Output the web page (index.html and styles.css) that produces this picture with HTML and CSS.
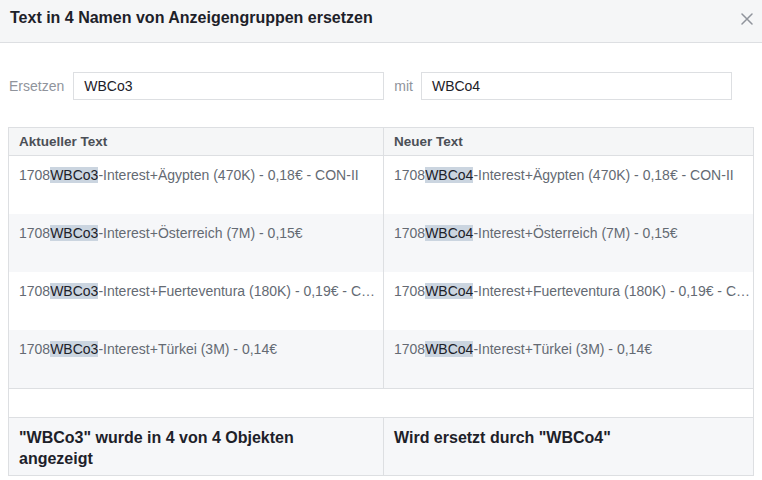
FILE: index.html
```html
<!DOCTYPE html>
<html lang="de">
<head>
<meta charset="utf-8">
<title>Text ersetzen</title>
<link rel="stylesheet" href="styles.css">
</head>
<body>
<div class="dialog">
  <div class="header">
    <h1 class="title">Text in 4 Namen von Anzeigengruppen ersetzen</h1>
    <button class="close" aria-label="Schließen">
      <svg width="12" height="12" viewBox="0 0 12 12"><path d="M1 1 L11 11 M11 1 L1 11" stroke="#90949c" stroke-width="1.5" fill="none" stroke-linecap="round"/></svg>
    </button>
  </div>
  <div class="form">
    <span class="label label-first">Ersetzen</span>
    <div class="input">WBCo3</div>
    <span class="label label-mit">mit</span>
    <div class="input">WBCo4</div>
  </div>
  <div class="grid">
    <div class="row head">
      <div class="cell">Aktueller Text</div>
      <div class="cell">Neuer Text</div>
    </div>
    <div class="row">
      <div class="cell">1708<span class="hl">WBCo3</span>-Interest+Ägypten (470K) - 0,18€ - CON-II</div>
      <div class="cell">1708<span class="hl">WBCo4</span>-Interest+Ägypten (470K) - 0,18€ - CON-II</div>
    </div>
    <div class="row alt">
      <div class="cell">1708<span class="hl">WBCo3</span>-Interest+Österreich (7M) - 0,15€</div>
      <div class="cell">1708<span class="hl">WBCo4</span>-Interest+Österreich (7M) - 0,15€</div>
    </div>
    <div class="row">
      <div class="cell">1708<span class="hl">WBCo3</span>-Interest+Fuerteventura (180K) - 0,19€ - C…</div>
      <div class="cell">1708<span class="hl">WBCo4</span>-Interest+Fuerteventura (180K) - 0,19€ - C…</div>
    </div>
    <div class="row alt last">
      <div class="cell">1708<span class="hl">WBCo3</span>-Interest+Türkei (3M) - 0,14€</div>
      <div class="cell">1708<span class="hl">WBCo4</span>-Interest+Türkei (3M) - 0,14€</div>
    </div>
    <div class="spacer"></div>
    <div class="row foot">
      <div class="cell">"WBCo3" wurde in 4 von 4 Objekten angezeigt</div>
      <div class="cell">Wird ersetzt durch "WBCo4"</div>
    </div>
  </div>
</div>
</body>
</html>
```
FILE: styles.css
```css
* { box-sizing: border-box; }
html, body { margin: 0; padding: 0; background: #ffffff; }
body {
  font-family: "Liberation Sans", Arial, Helvetica, sans-serif;
  color: #1d2129;
  width: 762px;
}
.dialog { width: 762px; }
.header {
  height: 43px;
  background: #f5f6f7;
  border-bottom: 1px solid #dddfe2;
  display: flex;
  justify-content: space-between;
  align-items: flex-start;
  padding: 8px 9px 0 10px;
}
.title {
  margin: 0;
  font-size: 16px;
  line-height: 20px;
  font-weight: bold;
  color: #1d2129;
}
.close {
  border: 0;
  background: transparent;
  padding: 0;
  margin-top: 5px;
  width: 12px;
  height: 12px;
  display: flex;
}
.form {
  display: flex;
  align-items: center;
  margin-top: 29px;
  padding-left: 9px;
  font-size: 14px;
}
.label { color: #90949c; line-height: 16px; }
.label-first { margin-right: 9px; }
.label-mit { margin-left: 10px; margin-right: 8px; }
.input {
  width: 311px;
  height: 28px;
  border: 1px solid #dddfe2;
  padding: 0 10px;
  line-height: 26px;
  color: #1d2129;
}
.grid {
  margin: 27px 0 0 8px;
  width: 746px;
  border: 1px solid #dddfe2;
}
.row {
  display: grid;
  grid-template-columns: 375px 1fr;
  height: 58px;
}
.cell {
  border-right: 1px solid #dddfe2;
  padding: 10px 10px 0 10px;
  font-size: 14px;
  line-height: 18px;
  color: #646a73;
  white-space: nowrap;
  overflow: hidden;
}
.cell:last-child { border-right: 0; }
.row.alt { background: #f6f7f9; }
.row.last { height: 59px; border-bottom: 1px solid #dddfe2; }
.row.head {
  height: 28px;
  background: #f5f6f7;
  border-bottom: 1px solid #dddfe2;
}
.row.head .cell {
  padding-top: 6px;
  font-size: 13.5px;
  line-height: 16px;
  font-weight: bold;
  color: #4b4f56;
}
.hl { background: #cbd5e0; color: #1d2129; }
.spacer {
  height: 29px;
  border-bottom: 1px solid #dddfe2;
}
.row.foot {
  height: 57px;
  background: #f6f7f9;
}
.row.foot .cell {
  padding: 9px 24px 0 10px;
  font-size: 16px;
  line-height: 21px;
  font-weight: bold;
  color: #1d2129;
  white-space: normal;
}
```
